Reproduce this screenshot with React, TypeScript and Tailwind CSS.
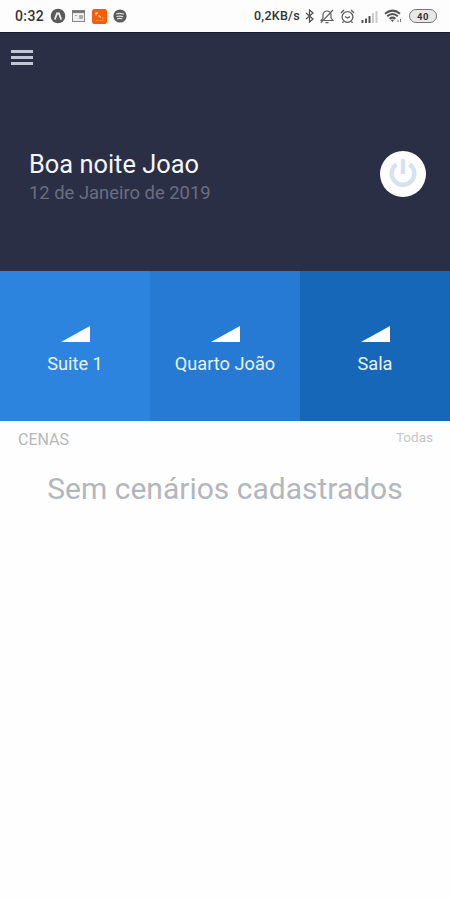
const rooms = [
  { name: "Suite 1", color: "bg-[#2c84df]" },
  { name: "Quarto João", color: "bg-[#277ad4]" },
  { name: "Sala", color: "bg-[#1767b9]" },
];

const StatusBar = () => {
  return (
    <div className="flex h-8 items-center justify-between bg-[#fdfdfd] pl-[15px] pr-[13px] text-[#333]">
      <div className="flex items-center">
        <span className="w-[35px] text-[14px] font-medium tracking-[0.4px]">0:32</span>
        <svg className="h-4 w-4" viewBox="0 0 16 16">
          <circle cx="8" cy="8" r="7.3" fill="#5a5a5a" />
          <path d="M4.8 11.5 7 5.5h2l2.2 6" fill="none" stroke="#eee" strokeWidth="1.8" />
        </svg>
        <svg className="ml-[6px] h-3 w-[13px]" viewBox="0 0 13 12">
          <rect x=".5" y=".5" width="12" height="11" fill="#eee" stroke="#888" />
          <path d="M0 1.8h13" stroke="#777" strokeWidth="2.5" />
          <path d="M3 5.5h2M7.5 5.5h3v3h-3z" fill="#aaa" stroke="#aaa" />
        </svg>
        <svg className="ml-[7px] h-[15px] w-[15px]" viewBox="0 0 15 15">
          <rect width="15" height="15" rx="2.5" fill="#f35d0b" />
          <path d="M4 6.5V4h2M6.5 6.5l2.5 2" fill="none" stroke="#ffd0b0" strokeWidth="1.3" />
          <path d="M4 11.5h7V8" fill="none" stroke="#f98a48" />
        </svg>
        <svg className="ml-[6px] h-[14px] w-[14px]" viewBox="0 0 14 14">
          <circle cx="7" cy="7" r="6.6" fill="#5a5a5a" />
          <path d="M3 5q4-1.5 8 .2M3.5 7.5q3.5-1 6.7.2M4 9.8q3-.8 5.3.2" fill="none" stroke="#ddd" strokeWidth="1.2" />
        </svg>
      </div>
      <div className="flex items-center">
        <span className="w-[51px] whitespace-nowrap text-[12.5px] font-medium tracking-[0.25px]">0,2KB/s</span>
        <svg className="h-[14px] w-[9px]" viewBox="0 0 9 14">
          <path d="m1 4 7 6-3.5 3V1L8 4l-7 6" fill="none" stroke="#555" strokeWidth="1.3" />
        </svg>
        <svg className="ml-[6px] h-[15px] w-[14px]" viewBox="0 0 14 15" fill="none" stroke="#5c5c5c" strokeWidth="1.2">
          <path d="M1 11.5h12L11 9V6a4 4 0 0 0-8 0v3zM5.5 13.6h3M.8 13.8 13 1" />
        </svg>
        <svg className="ml-[6px] h-[15px] w-[15px]" viewBox="0 0 15 15" fill="none" stroke="#5c5c5c" strokeWidth="1.3">
          <circle cx="7.5" cy="8" r="5.4" />
          <path d="M5 7.5 7.5 9 10 7.5M1 4l3-3M14 4l-3-3M3.5 12.5 2.5 14M11.5 12.5l1 1.5" />
        </svg>
        <svg className="ml-[6px] h-[13px] w-[17px]" viewBox="0 0 17 13">
          <path d="M1.5 10v3M5 8.5V13M8.5 6v7" stroke="#555" strokeWidth="2" />
          <path d="M12 3v10M15.5 1v12" stroke="#ccc" strokeWidth="2" />
        </svg>
        <svg className="ml-[6px] h-[14px] w-[19px]" viewBox="0 0 19 14" fill="none" stroke="#555">
          <path d="M1 4.8Q8.5-1.6 16 4.8M3.2 7.3q5.3-4.6 10.6 0M5.6 9.8q2.9-2.4 5.8 0" strokeWidth="2" />
          <path d="m6.5 10.8 2 2.2 2-2.2z" fill="#555" stroke="none" />
          <path d="M14 13.2v-2.4M16.5 13V9.8" stroke="#777" />
        </svg>
        <span className="ml-[6px] flex h-[14px] w-[28px] items-center justify-center rounded-full border border-[#777] bg-[#e8e8e8] text-[9.5px] font-bold leading-none tracking-[0.5px]">
          <span className="pt-px">40</span>
        </span>
      </div>
    </div>
  );
};

const Header = () => {
  return (
    <header className="h-[239px] border-t border-[#171b2d] bg-[#2a2f45]">
      <div className="ml-[11px] mt-[17px] flex w-[22px] flex-col gap-[3px]">
        <span className="h-[3px] bg-[#c3c6d5]" />
        <span className="h-[3px] bg-[#c3c6d5]" />
        <span className="h-[3px] bg-[#c3c6d5]" />
      </div>
      <div className="mt-[82px] flex items-start justify-between pl-[29px] pr-6">
        <div className="whitespace-nowrap pt-[2px]">
          <h1 className="text-[25.4px] leading-[30px] text-[#f5f6fa]">Boa noite Joao</h1>
          <p className="text-[18.4px] leading-7 text-[#6b6e80]">12 de Janeiro de 2019</p>
        </div>
        <button className="mt-[4px] flex h-[46px] w-[46px] items-center justify-center rounded-full bg-white">
          <svg className="h-[30px] w-[28px]" viewBox="0 0 28 30" fill="none" stroke="#d5e3f1" strokeWidth="4.4">
            <path d="M14 0v15M7.5 5.2a11.3 11.3 0 1 0 13 0" />
          </svg>
        </button>
      </div>
    </header>
  );
};

const App = () => {
  return (
    <div className="h-[900px] w-[450px] overflow-hidden bg-[#fefefe] font-['Roboto',sans-serif]">
      <StatusBar />
      <Header />
      <div className="grid h-[150px] grid-cols-[150px_150px_150px]">
        {rooms.map((room) => (
          <div key={room.name} className={`flex flex-col items-center pt-[55px] ${room.color}`}>
            <svg className="h-4 w-[29px]" viewBox="0 0 29 16">
              <path d="M0 16 29 0v16z" fill="#fff" />
            </svg>
            <span className="mt-[10px] whitespace-nowrap text-[18.2px] leading-6 text-[#e6f3ff]">{room.name}</span>
          </div>
        ))}
      </div>
      <div className="flex items-start justify-between pl-[18px] pr-[17px] pt-[8px] text-[#b5b7ba]">
        <span className="pt-px text-[16px] leading-5">CENAS</span>
        <span className="text-[13.5px] leading-4 text-[#c4c6c9]">Todas</span>
      </div>
      <p className="mt-[19px] whitespace-nowrap text-center text-[30px] leading-10 text-[#b3b7bc]">
        Sem cenários cadastrados
      </p>
    </div>
  );
};

export default App;
